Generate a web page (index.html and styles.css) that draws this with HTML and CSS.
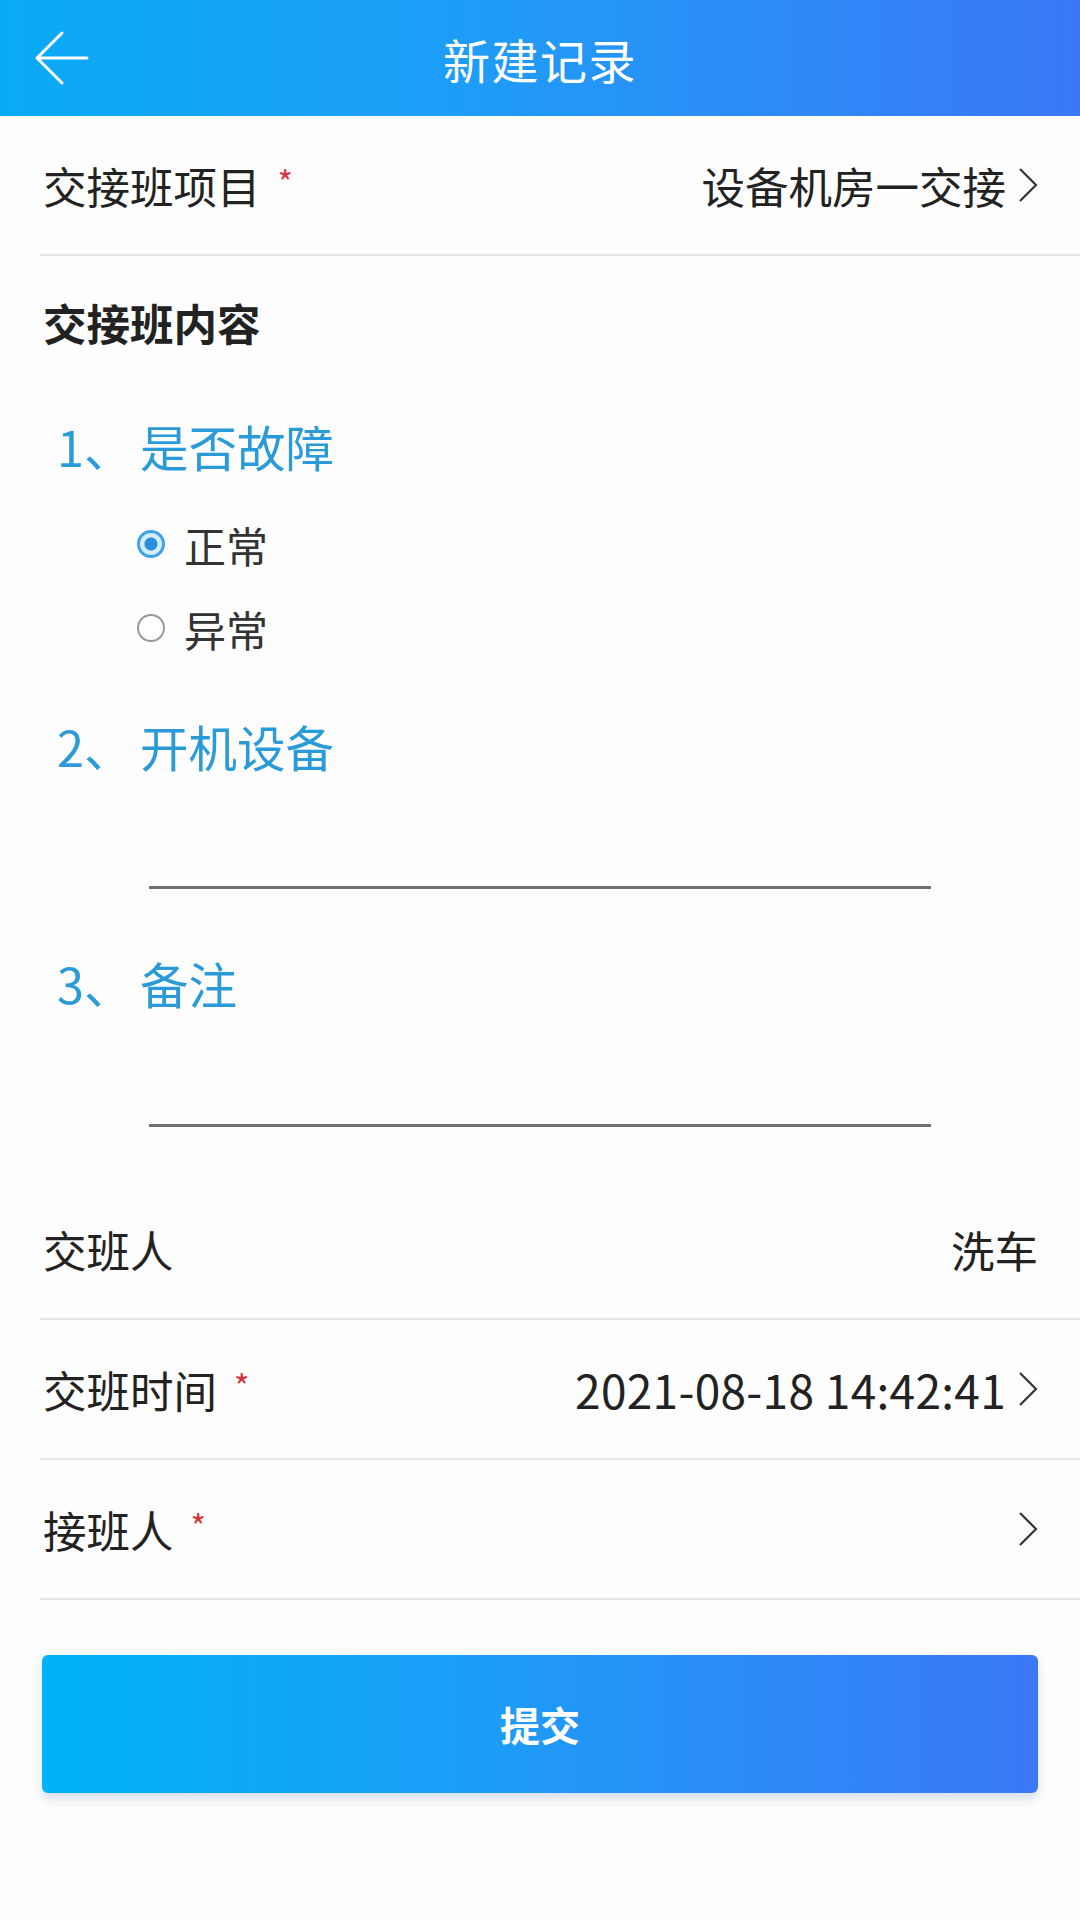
FILE: index.html
```html
<!DOCTYPE html>
<html lang="zh-CN">
<head>
<meta charset="utf-8">
<title>新建记录</title>
<link rel="stylesheet" href="styles.css">
</head>
<body>
<div class="page">
  <header class="topbar">
    <div class="back">
      <svg width="56" height="56" viewBox="0 0 56 56" aria-hidden="true">
        <path d="M28 3 L3 28 L28 53 M3 28 H53" fill="none" stroke="#fff" stroke-width="3" stroke-linecap="round" stroke-linejoin="round"/>
      </svg>
    </div>
    <h1 class="title">新建记录</h1>
    <div></div>
  </header>

  <div class="row">
    <div class="label">交接班项目<span class="req">*</span></div>
    <div class="value">设备机房一交接
      <svg class="chev" width="20" height="36" viewBox="0 0 20 36" aria-hidden="true"><path d="M2 2 L18 18 L2 34" fill="none" stroke="#333" stroke-width="2.2"/></svg>
    </div>
  </div>

  <section class="content">
    <h2 class="section-title">交接班内容</h2>

    <h3 class="question"><span class="qn">1、 </span><span>是否故障</span></h3>
    <div class="options">
      <label class="option"><span class="radio checked"></span><span>正常</span></label>
      <label class="option"><span class="radio"></span><span>异常</span></label>
    </div>

    <h3 class="question q-gap"><span class="qn">2、</span><span>开机设备</span></h3>
    <div class="line-input first"></div>

    <h3 class="question q-gap3"><span class="qn">3、</span><span>备注</span></h3>
    <div class="line-input second"></div>
  </section>

  <div class="row">
    <div class="label">交班人</div>
    <div class="value">洗车</div>
  </div>
  <div class="row">
    <div class="label">交班时间<span class="req">*</span></div>
    <div class="value"><span class="datetime">2021-08-18 14:42:41</span>
      <svg class="chev" width="20" height="36" viewBox="0 0 20 36" aria-hidden="true"><path d="M2 2 L18 18 L2 34" fill="none" stroke="#333" stroke-width="2.2"/></svg>
    </div>
  </div>
  <div class="row">
    <div class="label">接班人<span class="req">*</span></div>
    <div class="value">
      <svg class="chev" width="20" height="36" viewBox="0 0 20 36" aria-hidden="true"><path d="M2 2 L18 18 L2 34" fill="none" stroke="#333" stroke-width="2.2"/></svg>
    </div>
  </div>

  <div class="actions">
    <button class="submit" type="button">提交</button>
  </div>
</div>
</body>
</html>
```
FILE: styles.css
```css
* { box-sizing: border-box; }

html, body {
  margin: 0;
  padding: 0;
  background: #fdfdfd;
}

body {
  font-family: "Noto Sans CJK SC", "Noto Sans", sans-serif;
  color: #222;
}

.page {
  width: 1080px;
  min-height: 1920px;
  background: #fdfdfd;
}

/* top bar */
.topbar {
  height: 116px;
  display: grid;
  grid-template-columns: 1fr auto 1fr;
  align-items: center;
  background: linear-gradient(90deg, #0aabf6 0%, #1f9cf7 45%, #3b78f5 100%);
}

.back {
  padding-left: 34px;
  display: flex;
  align-items: center;
}

.title {
  margin: 0;
  font-size: 47px;
  font-weight: 400;
  color: #fff;
  letter-spacing: 1.5px;
  line-height: 1;
}

/* form rows */
.row {
  height: 140px;
  margin-left: 40px;
  padding: 0 42px 0 3px;
  display: flex;
  align-items: center;
  justify-content: space-between;
  border-bottom: 2px solid #e6e6e6;
  font-size: 43.5px;
}

.label {
  display: flex;
  align-items: center;
  color: #222;
}

.req {
  color: #d8333b;
  font-size: 33px;
  margin-left: 17px;
  position: relative;
  top: -4px;
}

.value {
  display: flex;
  align-items: center;
  color: #222;
}

.datetime {
  font-size: 46px;
  letter-spacing: 0.3px;
}

.chev {
  margin-left: 12px;
  flex: none;
}

/* handover content */
.content {
  padding-top: 37px;
  padding-bottom: 53px;
}

.section-title {
  margin: 0 0 0 43px;
  font-size: 43.5px;
  font-weight: 700;
  line-height: 60px;
  color: #222;
}

.question {
  margin: 61px 0 0 57px;
  display: flex;
  font-size: 48.5px;
  font-weight: 400;
  line-height: 64px;
  color: #2b9ad9;
}

.qn {
  width: 83px;
  flex: none;
}

.q-gap { margin-top: 44px; }
.q-gap3 { margin-top: 62px; }

.options {
  margin-top: 24px;
  padding-left: 137px;
}

.option {
  height: 84px;
  display: flex;
  align-items: center;
  font-size: 42px;
  color: #333;
}

.radio {
  width: 28px;
  height: 28px;
  border-radius: 50%;
  border: 2px solid #9a9a9a;
  background: #fff;
  margin-right: 19px;
  flex: none;
}

.radio.checked {
  border: 3px solid #3ea3e8;
  background: radial-gradient(circle, #2a8fe0 0 6px, #d6ecfb 7px);
}

.line-input {
  margin-left: 149px;
  width: 782px;
  height: 60px;
  border-bottom: 3px solid #707070;
}

.line-input.first { margin-top: 51px; }
.line-input.second { margin-top: 52px; }

/* submit */
.actions {
  padding: 55px 42px 0 42px;
}

.submit {
  width: 100%;
  height: 138px;
  border: none;
  border-radius: 6px;
  background: linear-gradient(90deg, #00b3f9 0%, #1a9ff7 40%, #3b78f5 100%);
  box-shadow: 0 6px 10px rgba(40, 90, 160, 0.18);
  color: #fff;
  font-family: "Noto Sans CJK SC", "Noto Sans", sans-serif;
  font-size: 40px;
  font-weight: 700;
}
```
